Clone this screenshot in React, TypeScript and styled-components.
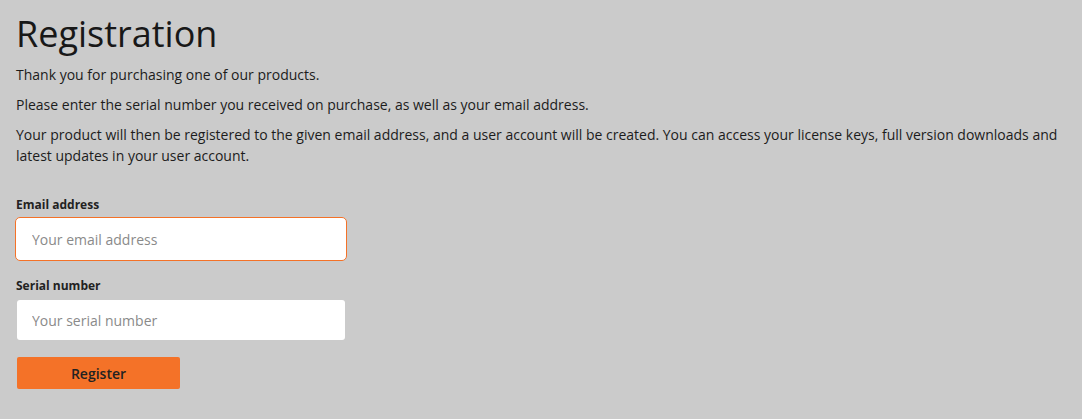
import React from 'react'
import styled, { createGlobalStyle } from 'styled-components'

const GlobalStyle = createGlobalStyle`
  html, body {
    margin: 0;
    padding: 0;
    background: #cbcbcb;
  }
  body {
    font-family: 'Open Sans', 'Liberation Sans', sans-serif;
    color: #1c1c1c;
  }
`

const Page = styled.main`
  padding: 12px 16px 20px;
  min-height: 419px;
  box-sizing: border-box;
`

const Title = styled.h1`
  margin: 0 0 9px;
  font-size: 36px;
  font-weight: 400;
  line-height: 43px;
  color: #181818;
`

const Text = styled.p`
  margin: 0 0 9px;
  font-size: 14px;
  line-height: 21px;
`

const Form = styled.form`
  display: flex;
  flex-direction: column;
  align-items: flex-start;
  margin-top: 30px;
`

const Field = styled.div`
  display: flex;
  flex-direction: column;
  align-items: flex-start;
  margin-bottom: 18px;
`

const Label = styled.label`
  font-size: 12px;
  font-weight: 700;
  line-height: 18px;
  margin-bottom: 5px;
  color: #222;
`

const Input = styled.input<{ $focused?: boolean }>`
  box-sizing: border-box;
  width: ${(p) => (p.$focused ? 332 : 328)}px;
  height: ${(p) => (p.$focused ? 44 : 40)}px;
  margin: ${(p) => (p.$focused ? '-2px 0 -2px -1px' : '0 0 0 1px')};
  padding: 0 0 0 ${(p) => (p.$focused ? 16 : 15)}px;
  border: ${(p) => (p.$focused ? '1px solid #f47228' : 'none')};
  border-radius: ${(p) => (p.$focused ? 5 : 3)}px;
  background: #fff;
  font-family: inherit;
  font-size: 14px;
  color: #222;
  outline: none;
  caret-color: #222;
  &::placeholder {
    color: #8a8a8a;
  }
`

const Button = styled.button`
  margin: -1px 0 0 1px;
  width: 163px;
  height: 32px;
  border: none;
  border-radius: 2px;
  background: #f47228;
  font-family: inherit;
  font-size: 14px;
  font-weight: 600;
  color: #222;
  cursor: pointer;
`

export default function App() {
  return (
    <>
      <GlobalStyle />
      <Page>
        <Title>Registration</Title>
        <Text>Thank you for purchasing one of our products.</Text>
        <Text>
          Please enter the serial number you received on purchase, as well as your email address.
        </Text>
        <Text>
          Your product will then be registered to the given email address, and a user account will
          be created. You can access your license keys, full version downloads and latest updates
          in your user account.
        </Text>
        <Form onSubmit={(e) => e.preventDefault()}>
          <Field>
            <Label htmlFor="email">Email address</Label>
            <Input id="email" type="email" placeholder="Your email address" $focused autoFocus />
          </Field>
          <Field>
            <Label htmlFor="serial">Serial number</Label>
            <Input id="serial" type="text" placeholder="Your serial number" />
          </Field>
          <Button type="submit">Register</Button>
        </Form>
      </Page>
    </>
  )
}
